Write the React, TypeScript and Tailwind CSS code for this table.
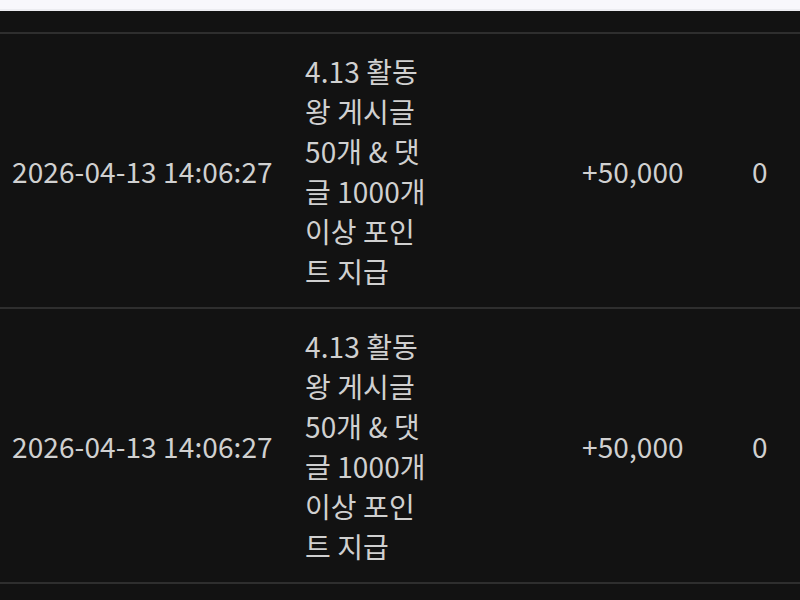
import React from 'react';

const rows = [
  { date: '2026-04-13 14:06:27', desc: '4.13 활동왕 게시글 50개 & 댓글 1000개 이상 포인트 지급', amount: '+50,000', balance: '0' },
  { date: '2026-04-13 14:06:27', desc: '4.13 활동왕 게시글 50개 & 댓글 1000개 이상 포인트 지급', amount: '+50,000', balance: '0' },
];

export default function App() {
  return (
    <div className="w-[800px] h-[600px] overflow-hidden bg-[#121212] text-[#d0d0d0] font-['Noto_Sans_CJK_KR','Noto_Sans',sans-serif]">
      <div className="h-[9px] bg-[#f8f7fc]" />
      <div className="h-[2px] bg-[#ececf1]" />
      <div className="h-[21px]" />
      <div className="border-t-2 border-[#2e2e2e]">
        {rows.map((r, i) => (
          <div key={i} className="flex items-center border-b-2 border-[#2e2e2e] pt-[17px] pb-[16px] text-[28px] leading-[40px] tracking-[0.1px]">
            <div className="w-[293px] pl-[12px] shrink-0 whitespace-nowrap">{r.date}</div>
            <div className="w-[154px] px-[12px] shrink-0">{r.desc}</div>
            <div className="w-[288px] pl-[135px] shrink-0 whitespace-nowrap">{r.amount}</div>
            <div className="flex-1 pl-[17px]">{r.balance}</div>
          </div>
        ))}
      </div>
    </div>
  );
}
